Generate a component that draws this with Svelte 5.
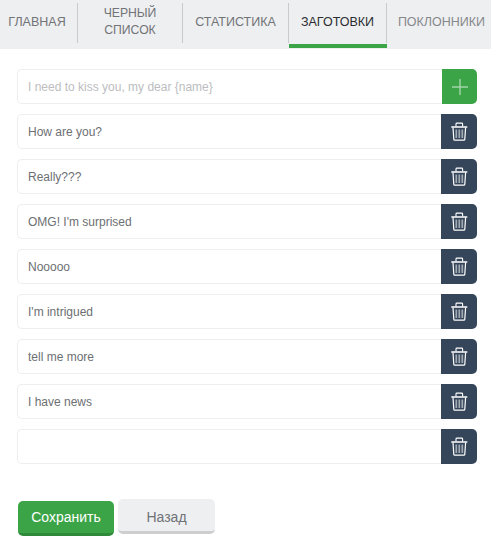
<script>
  const tabs = [
    { label: 'ГЛАВНАЯ', width: 78, first: true },
    { label: 'ЧЕРНЫЙ СПИСОК', width: 105, narrow: true },
    { label: 'СТАТИСТИКА', width: 106 },
    { label: 'ЗАГОТОВКИ', width: 98, active: true },
    { label: 'ПОКЛОННИКИ', width: 104, last: true }
  ]

  const phrases = [
    'How are you?',
    'Really???',
    "OMG! I'm surprised",
    'Nooooo',
    "I'm intrigued",
    'tell me more',
    'I have news',
    ''
  ]
</script>

<nav class="tabs">
  {#each tabs as tab}
    <div
      class="tab"
      class:active={tab.active}
      class:narrow={tab.narrow}
      class:first={tab.first}
      class:last={tab.last}
      style="width: {tab.width}px"
    >
      <span>{tab.label}</span>
    </div>
  {/each}
</nav>

<main class="content">
  <div class="row">
    <input class="field" placeholder="I need to kiss you, my dear {'{'}name{'}'}" />
    <button class="side add" aria-label="Добавить">
      <svg width="16" height="16" viewBox="0 0 16 16">
        <path d="M8 0v16M0 8h16" stroke="#a5d4aa" stroke-width="1.4" fill="none" />
      </svg>
    </button>
  </div>

  {#each phrases as phrase}
    <div class="row">
      <input class="field" value={phrase} />
      <button class="side remove" aria-label="Удалить">
        <svg width="17" height="19" viewBox="0 0 17 19" fill="none" stroke="#fff">
          <path d="M.8 5h15" stroke-width="1.400" stroke-linecap="round" />
          <path d="M5 4.500V2c0-.5.400-.9.900-.9h4.800c.5 0 .9.400.9.900v2.500" stroke-width="1.100" />
          <path d="M2 5.500l.8 11.700c0 .5.500 1 1 1h9c.5 0 1-.5 1-1l.8-11.700" stroke-width="1.200" />
          <path d="M5.300 7.500v8.500M8.300 7.500v8.500M11.300 7.500v8.500" stroke="#a3abb5" stroke-width="1.700" />
        </svg>
      </button>
    </div>
  {/each}

  <div class="actions">
    <button class="btn save">Сохранить</button>
    <button class="btn back">Назад</button>
  </div>
</main>

<style>
  :global(body) {
    margin: 0;
    background: #fff;
    font-family: 'Liberation Sans', Arial, sans-serif;
  }

  .tabs {
    display: flex;
    height: 49px;
    background: #eeeff1;
  }

  .tab {
    box-sizing: border-box;
    height: 40px;
    margin-top: 3px;
    display: flex;
    align-items: center;
    justify-content: center;
    text-align: center;
    font-size: 12.5px;
    line-height: 17px;
    color: #717377;
    border-right: 1px solid #c9cacc;
    flex: none;
  }

  .tab span {
    display: block;
    margin-top: -2px;
  }

  .tab.first {
    padding-right: 3px;
  }

  .tab.narrow span {
    width: 60px;
    font-size: 12.2px;
  }

  .tab.active {
    color: #2b2d30;
    position: relative;
  }

  .tab.active::after {
    content: '';
    position: absolute;
    left: 0;
    right: -1px;
    top: 41px;
    height: 4px;
    background: #3ba446;
  }

  .tab.last {
    border-right: none;
    padding-left: 5px;
    color: #86888c;
  }

  .content {
    padding: 20px 14px 0 17px;
  }

  .row {
    display: flex;
    height: 35px;
    margin-bottom: 10px;
  }

  .field {
    flex: 1;
    min-width: 0;
    box-sizing: border-box;
    height: 35px;
    padding: 0 10px;
    border: 1px solid #eeeeee;
    border-right: none;
    border-radius: 5px 0 0 5px;
    font: 12px 'Liberation Sans', Arial, sans-serif;
    color: #6d6f73;
    outline: none;
    background: #fff;
  }

  .field::placeholder {
    color: #bcbdc0;
    opacity: 1;
  }

  .side {
    flex: none;
    height: 35px;
    padding: 0;
    border: none;
    border-radius: 0 5px 5px 0;
    display: flex;
    align-items: center;
    justify-content: center;
  }

  .add {
    width: 35px;
    background: #3ba446;
  }

  .remove {
    width: 36px;
    background: #36465a;
  }

  .actions {
    display: flex;
    align-items: flex-start;
    gap: 4px;
    margin-top: 35px;
    padding-left: 1px;
  }

  .btn {
    box-sizing: border-box;
    height: 35px;
    border: none;
    border-radius: 5px;
    font: 14px 'Liberation Sans', Arial, sans-serif;
    padding: 0;
  }

  .save {
    width: 96px;
    margin-top: 2px;
    background: #3ba446;
    color: #fff;
    border-bottom: 3px solid #2f8a39;
  }

  .back {
    width: 97px;
    padding-top: 3px;
    background: #eeeff1;
    color: #6f7277;
    border-bottom: 3px solid #cdced0;
  }
</style>
